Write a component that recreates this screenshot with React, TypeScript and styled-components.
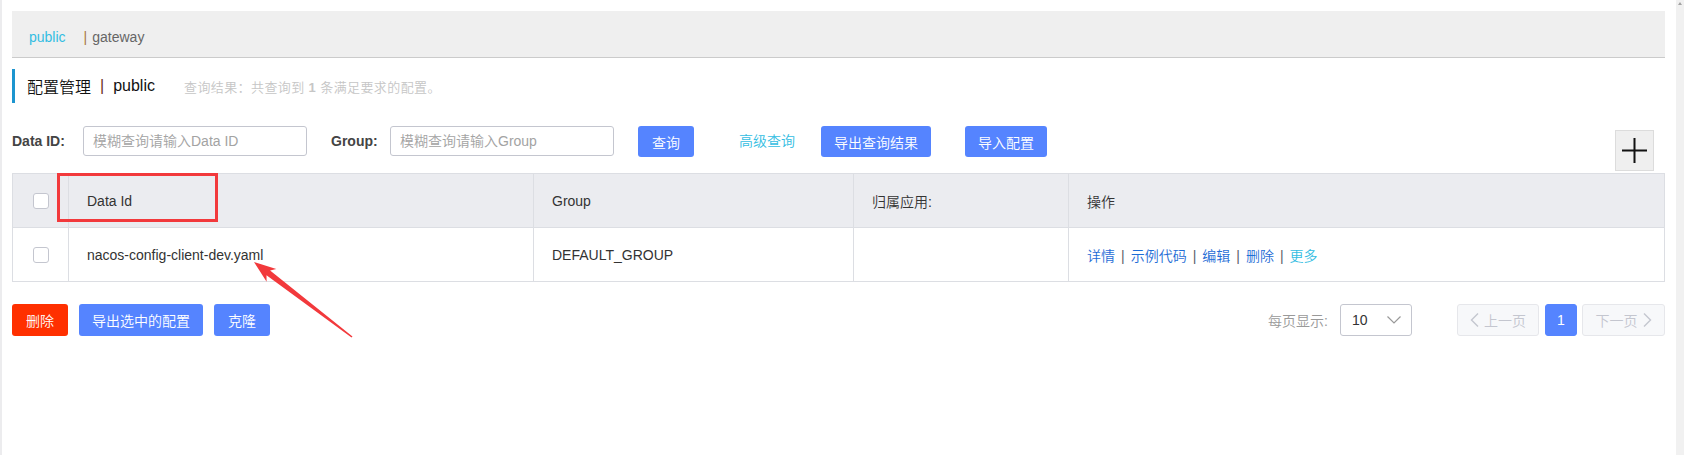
import styled, { createGlobalStyle } from 'styled-components';

const GlobalStyle = createGlobalStyle`
  html, body {
    margin: 0;
    padding: 0;
  }
  body {
    font-family: "Liberation Sans", "Noto Sans CJK SC", sans-serif;
    font-size: 14px;
    font-weight: 350;
    color: #333;
    background: #fff;
  }
  * {
    box-sizing: border-box;
  }
`;

const columns = '55px 465px 320px 215px 596px';

const Page = styled.div`
  display: flex;
  height: 455px;
  overflow: hidden;
  background: #fff;
`;

const LeftEdge = styled.div`
  width: 2px;
  flex-shrink: 0;
  background: #ececee;
`;

const Main = styled.main`
  position: relative;
  width: 1653px;
  margin-left: 10px;
  padding-top: 11px;
`;

const ScrollTrack = styled.div`
  position: relative;
  margin-left: auto;
  width: 8px;
  flex-shrink: 0;
  background: #f1f1f1;

  // tiny arrow of the scroll bar
  &::before {
    content: '';
    position: absolute;
    top: 2px;
    left: 2px;
    border-left: 2px solid transparent;
    border-right: 2px solid transparent;
    border-bottom: 3px solid #a3a3a3;
  }
`;

const TopBar = styled.div`
  height: 47px;
  display: flex;
  align-items: center;
  padding: 5px 0 0 17px;
  background: #efefef;
  border-bottom: 1px solid #cbcbcb;
  font-size: 14px;
`;

const Namespace = styled.span<{ $active?: boolean }>`
  color: ${({ $active }) => ($active ? '#33bde2' : '#666')};
`;

const NamespaceSep = styled.span`
  margin: 0 5px 0 18px;
  color: #a8773f;
`;

const TitleBar = styled.div`
  margin-top: 11px;
  height: 34px;
  display: flex;
  align-items: center;
  border-left: 3px solid #1d95cf;
  padding-left: 12px;
`;

const TitleText = styled.span`
  font-size: 16px;
  color: #111;
`;

const TitleSep = styled.span`
  margin: 0 9px;
  font-size: 16px;
  color: #6b2c1a;
`;

const ResultHint = styled.span`
  margin-left: 29px;
  font-size: 13px;
  letter-spacing: 0.4px;
  color: #c6c6c6;

  b {
    font-weight: bold;
  }
`;

const SearchRow = styled.div`
  margin-top: 23px;
  display: flex;
  align-items: flex-start;
`;

const FieldLabel = styled.label<{ $width: number; $ml?: number }>`
  width: ${({ $width }) => $width}px;
  margin-left: ${({ $ml = 0 }) => $ml}px;
  height: 30px;
  line-height: 30px;
  font-weight: bold;
  color: #444;
  white-space: nowrap;
`;

const SearchInput = styled.input`
  width: 224px;
  height: 30px;
  padding: 0 9px;
  border: 1px solid #c4c6cf;
  border-radius: 3px;
  font-family: inherit;
  font-size: 14px;
  font-weight: inherit;
  color: #333;
  outline: none;

  &::placeholder {
    color: #a3a3a3;
  }
`;

const Button = styled.button<{ $tone?: 'primary' | 'danger'; $ml?: number; $h?: number }>`
  height: ${({ $h = 31 }) => $h}px;
  min-width: 56px;
  margin-left: ${({ $ml = 0 }) => $ml}px;
  padding: 0 13px;
  border: none;
  border-radius: 3px;
  background: ${({ $tone }) => ($tone === 'danger' ? '#ff3000' : '#5584ff')};
  color: #fff;
  font-family: inherit;
  font-size: 14px;
  font-weight: inherit;
  white-space: nowrap;
  cursor: pointer;
`;

const TextLink = styled.a<{ $ml?: number }>`
  margin-left: ${({ $ml = 0 }) => $ml}px;
  height: 31px;
  line-height: 31px;
  color: #33bde2;
  text-decoration: none;
  white-space: nowrap;
`;

const AddButton = styled.button`
  margin: 4px 11px 0 auto;
  width: 39px;
  height: 41px;
  padding: 0;
  display: flex;
  align-items: center;
  justify-content: center;
  background: #efefef;
  border: 1px solid #dcdcdc;
  cursor: pointer;
`;

const Table = styled.div`
  margin-top: 2px;
  border: 1px solid #dcdee3;
`;

const TableRow = styled.div<{ $head?: boolean }>`
  display: grid;
  grid-template-columns: ${columns};
  height: ${({ $head }) => ($head ? 54 : 53)}px;
  background: ${({ $head }) => ($head ? '#ebecf0' : '#fff')};
  border-bottom: ${({ $head }) => ($head ? '1px solid #dcdee3' : 'none')};
`;

const Cell = styled.div`
  position: relative;
  display: flex;
  align-items: center;
  padding-left: 18px;
  border-left: 1px solid #dcdee3;
  color: #333;
  white-space: nowrap;

  &:first-child {
    border-left: none;
    padding-left: 0;
    justify-content: center;
  }
`;

const CheckBox = styled.span`
  width: 16px;
  height: 16px;
  border: 1px solid #c4c6cf;
  border-radius: 3px;
  background: #fff;
`;

const Highlight = styled.span`
  position: absolute;
  left: -12px;
  top: -1px;
  width: 161px;
  height: 49px;
  border: 3px solid #f2393c;
  pointer-events: none;
`;

const OpLink = styled.a<{ $accent?: boolean }>`
  color: ${({ $accent }) => ($accent ? '#33bde2' : '#1f6dd6')};
  text-decoration: none;
`;

const OpSep = styled.span`
  margin: 0 6px;
  color: #5b5f6b;
`;

const Footer = styled.div`
  margin-top: 22px;
  display: flex;
  align-items: center;
`;

const PageSizeLabel = styled.span`
  margin-left: auto;
  color: #999;
`;

const Select = styled.div`
  margin-left: 12px;
  width: 72px;
  height: 32px;
  display: flex;
  align-items: center;
  justify-content: space-between;
  padding: 0 10px 0 11px;
  border: 1px solid #c4c6cf;
  border-radius: 3px;
  color: #333;
`;

const PagerButton = styled.button<{ $ml: number; $width: number; $current?: boolean }>`
  margin-left: ${({ $ml }) => $ml}px;
  width: ${({ $width }) => $width}px;
  height: 32px;
  padding: 0;
  display: flex;
  align-items: center;
  justify-content: center;
  gap: 5px;
  border: 1px solid ${({ $current }) => ($current ? '#5584ff' : '#e6e7eb')};
  border-radius: 3px;
  background: ${({ $current }) => ($current ? '#5584ff' : '#f7f8fa')};
  color: ${({ $current }) => ($current ? '#fff' : '#c4c6cf')};
  font-family: inherit;
  font-size: 14px;
  font-weight: inherit;
`;

const Annotation = styled.svg`
  position: absolute;
  left: 228px;
  top: 258px;
  pointer-events: none;
`;

const Chevron = ({ dir }: { dir: 'left' | 'right' | 'down' }) => {
  if (dir === 'down') {
    return (
      <svg width='14' height='8' viewBox='0 0 14 8'>
        <polyline points='0.5,0.5 7,7 13.5,0.5' fill='none' stroke='#999' strokeWidth='1.2' />
      </svg>
    );
  }
  const points = dir === 'left' ? '8,0.5 1.5,7 8,13.5' : '1,0.5 7.5,7 1,13.5';
  return (
    <svg width='9' height='14' viewBox='0 0 9 14'>
      <polyline points={points} fill='none' stroke='#c4c6cf' strokeWidth='1.4' />
    </svg>
  );
};

const operations = ['详情', '示例代码', '编辑', '删除'];

const App = () => {
  return (
    <>
      <GlobalStyle />
      <Page>
        <LeftEdge />
        <Main>
          <TopBar>
            <Namespace $active>public</Namespace>
            <NamespaceSep>|</NamespaceSep>
            <Namespace>gateway</Namespace>
          </TopBar>

          <TitleBar>
            <TitleText>配置管理</TitleText>
            <TitleSep>|</TitleSep>
            <TitleText>public</TitleText>
            <ResultHint>
              查询结果：共查询到 <b>1</b> 条满足要求的配置。
            </ResultHint>
          </TitleBar>

          <SearchRow>
            <FieldLabel $width={71}>Data ID:</FieldLabel>
            <SearchInput placeholder='模糊查询请输入Data ID' />
            <FieldLabel $width={59} $ml={24}>
              Group:
            </FieldLabel>
            <SearchInput placeholder='模糊查询请输入Group' />
            <Button $ml={24}>查询</Button>
            <TextLink $ml={45}>高级查询</TextLink>
            <Button $ml={26}>导出查询结果</Button>
            <Button $ml={34}>导入配置</Button>
            <AddButton>
              <svg width='25' height='25' viewBox='0 0 25 25'>
                <path d='M12.5 0 V25 M0 12.5 H25' stroke='#111' strokeWidth='2' />
              </svg>
            </AddButton>
          </SearchRow>

          <Table>
            <TableRow $head>
              <Cell>
                <CheckBox />
              </Cell>
              <Cell>
                Data Id
                <Highlight />
              </Cell>
              <Cell>Group</Cell>
              <Cell>归属应用:</Cell>
              <Cell>操作</Cell>
            </TableRow>
            <TableRow>
              <Cell>
                <CheckBox />
              </Cell>
              <Cell>nacos-config-client-dev.yaml</Cell>
              <Cell>DEFAULT_GROUP</Cell>
              <Cell />
              <Cell>
                {operations.map((op) => (
                  <span key={op}>
                    <OpLink>{op}</OpLink>
                    <OpSep>|</OpSep>
                  </span>
                ))}
                <OpLink $accent>更多</OpLink>
              </Cell>
            </TableRow>
          </Table>

          <Footer>
            <Button $tone='danger' $h={32}>
              删除
            </Button>
            <Button $ml={11} $h={32}>
              导出选中的配置
            </Button>
            <Button $ml={11} $h={32}>
              克隆
            </Button>

            <PageSizeLabel>每页显示:</PageSizeLabel>
            <Select>
              <span>10</span>
              <Chevron dir='down' />
            </Select>
            <PagerButton $ml={45} $width={82}>
              <Chevron dir='left' />
              上一页
            </PagerButton>
            <PagerButton $ml={6} $width={32} $current>
              1
            </PagerButton>
            <PagerButton $ml={5} $width={83}>
              下一页
              <Chevron dir='right' />
            </PagerButton>
          </Footer>

          {/* red arrow drawn over the screenshot */}
          <Annotation width='116' height='82' viewBox='0 0 116 82'>
            <polygon
              points='14,4 36.3,11 30.1,12.5 112.5,78.4 111.5,79.6 26.5,17.3 26.6,23.7'
              fill='#f2393c'
            />
          </Annotation>
        </Main>
        <ScrollTrack />
      </Page>
    </>
  );
};

export default App;
